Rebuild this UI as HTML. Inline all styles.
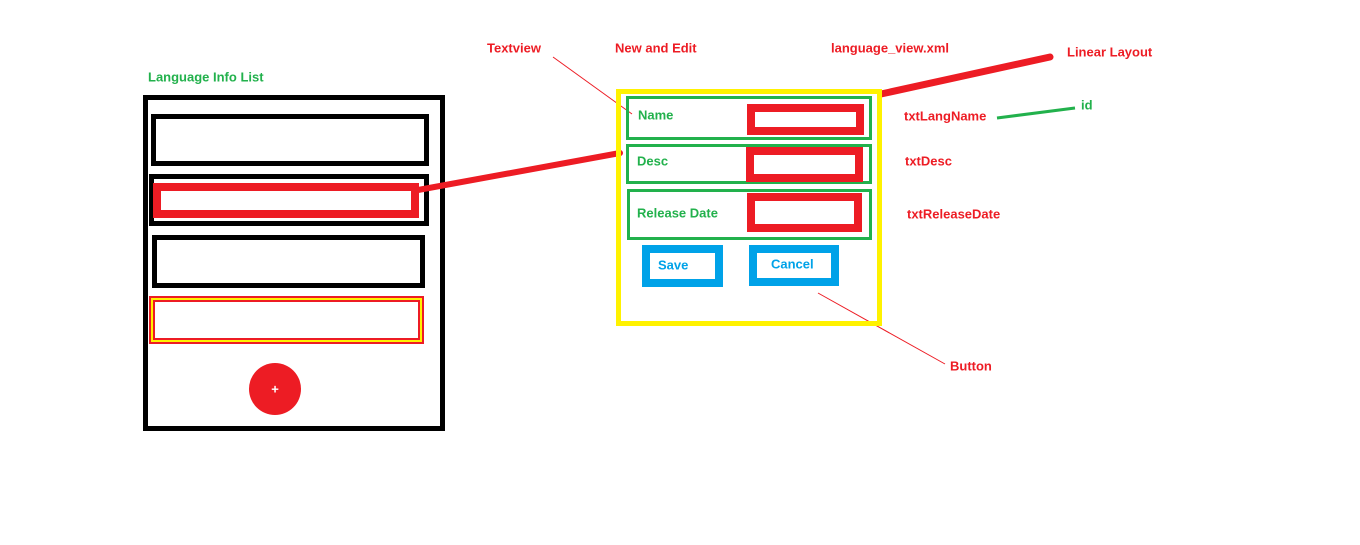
<!DOCTYPE html>
<html><head><meta charset="utf-8"><style>
html,body{margin:0;padding:0;background:#fff;width:1360px;height:545px;overflow:hidden}
svg text{font-family:"Liberation Sans",sans-serif;font-weight:bold;font-size:13px;dominant-baseline:central}
</style></head><body>
<svg width="1360" height="545" xmlns="http://www.w3.org/2000/svg">
<rect width="1360" height="545" fill="#fff"/>
<!-- left panel -->
<rect x="145.5" y="97.5" width="297" height="331" fill="none" stroke="#000" stroke-width="5"/>
<rect x="153.5" y="116.5" width="273" height="47" fill="none" stroke="#000" stroke-width="5"/>
<rect x="151.5" y="176.5" width="275" height="47" fill="none" stroke="#000" stroke-width="5"/>
<rect x="157" y="187" width="258" height="27" fill="none" stroke="#ed1c24" stroke-width="8"/>
<rect x="154.5" y="237.5" width="268" height="48" fill="none" stroke="#000" stroke-width="5"/>
<rect x="150" y="297" width="273" height="46" fill="none" stroke="#ed1c24" stroke-width="2"/>
<rect x="152" y="299" width="269" height="42" fill="none" stroke="#fff200" stroke-width="2"/>
<rect x="154" y="301" width="265" height="38" fill="none" stroke="#ed1c24" stroke-width="2"/>
<circle cx="275" cy="389" r="26" fill="#ed1c24"/>
<text x="275" y="389" fill="#fff" text-anchor="middle" font-size="12">+</text>
<text x="148" y="77" fill="#22b14c">Language Info List</text>
<!-- connectors -->
<line x1="418" y1="190" x2="620" y2="153" stroke="#ed1c24" stroke-width="6" stroke-linecap="round"/>
<line x1="881" y1="94" x2="1050" y2="57" stroke="#ed1c24" stroke-width="7" stroke-linecap="round"/>
<line x1="553" y1="57" x2="632" y2="114" stroke="#ed1c24" stroke-width="1"/>
<line x1="818" y1="293" x2="945" y2="364" stroke="#ed1c24" stroke-width="1"/>
<line x1="997" y1="118" x2="1075" y2="108" stroke="#22b14c" stroke-width="3"/>
<!-- form -->
<rect x="618.5" y="91.5" width="261" height="232" fill="none" stroke="#fff200" stroke-width="5"/>
<rect x="627.5" y="97.5" width="243" height="41" fill="none" stroke="#22b14c" stroke-width="3"/>
<rect x="751" y="108" width="109" height="23" fill="none" stroke="#ed1c24" stroke-width="8"/>
<rect x="627.5" y="145.5" width="243" height="37" fill="none" stroke="#22b14c" stroke-width="3"/>
<rect x="750" y="151" width="109" height="27" fill="none" stroke="#ed1c24" stroke-width="8"/>
<rect x="628.5" y="190.5" width="242" height="48" fill="none" stroke="#22b14c" stroke-width="3"/>
<rect x="751" y="197" width="107" height="31" fill="none" stroke="#ed1c24" stroke-width="8"/>
<rect x="646" y="249" width="73" height="34" fill="none" stroke="#00a2e8" stroke-width="8"/>
<rect x="753" y="249" width="82" height="33" fill="none" stroke="#00a2e8" stroke-width="8"/>
<text x="638" y="115" fill="#22b14c">Name</text>
<text x="637" y="161" fill="#22b14c">Desc</text>
<text x="637" y="213" fill="#22b14c">Release Date</text>
<text x="658" y="265" fill="#00a2e8">Save</text>
<text x="771" y="264" fill="#00a2e8">Cancel</text>
<!-- labels -->
<text x="487" y="48" fill="#ed1c24">Textview</text>
<text x="615" y="48" fill="#ed1c24">New and Edit</text>
<text x="831" y="48" fill="#ed1c24">language_view.xml</text>
<text x="1067" y="52" fill="#ed1c24">Linear Layout</text>
<text x="904" y="116" fill="#ed1c24">txtLangName</text>
<text x="1081" y="105" fill="#22b14c">id</text>
<text x="905" y="161" fill="#ed1c24">txtDesc</text>
<text x="907" y="214" fill="#ed1c24">txtReleaseDate</text>
<text x="950" y="366" fill="#ed1c24">Button</text>
</svg>
</body></html>
